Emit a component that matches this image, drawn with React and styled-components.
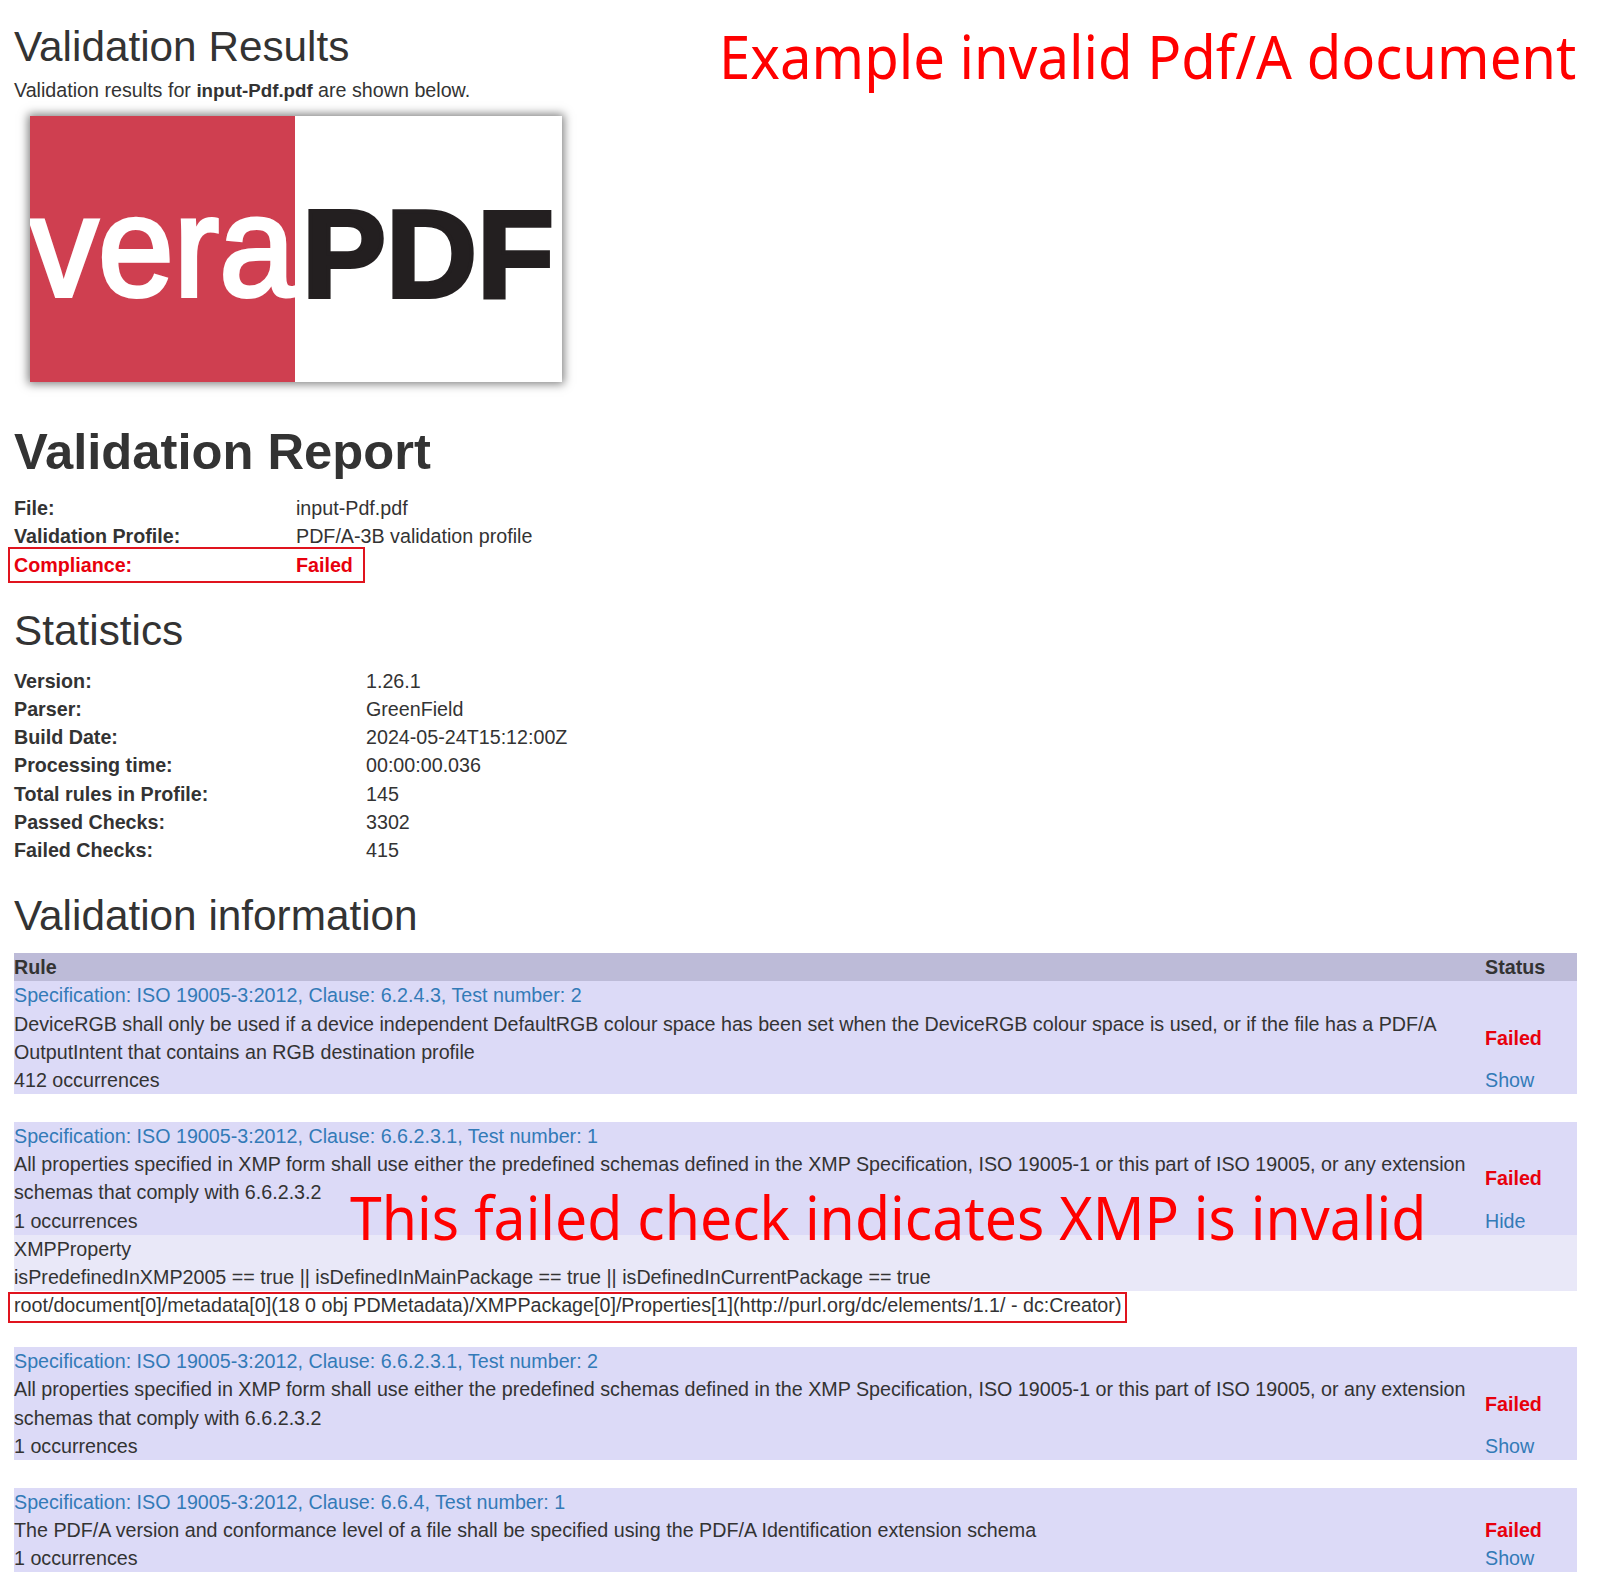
import React from 'react'
import styled, { createGlobalStyle } from 'styled-components'

const GlobalStyle = createGlobalStyle`
  html, body {
    margin: 0;
    padding: 0;
    background: #fff;
  }
  body {
    font-family: "Liberation Sans", Arial, sans-serif;
    font-size: 19.7px;
    line-height: 28.2px;
    color: #333;
  }
`

const Page = styled.div`
  position: relative;
  width: 1600px;
  height: 1594px;
  padding: 24px 23.5px 0 14px;
  box-sizing: border-box;
  overflow: hidden;
`
const PageTitle = styled.h1`
  margin: 0;
  font-size: 42.3px;
  line-height: 46px;
  font-weight: 400;
`
const Intro = styled.p`
  margin: 6px 0 0;
  b {
    font-size: 18.7px;
  }
`
const LogoBox = styled.div`
  width: 532px;
  height: 266px;
  margin: 10.8px 0 0 15.5px;
  box-shadow: 0 0 9px 2px rgba(0, 0, 0, 0.5);
  line-height: 0;
`
const ReportTitle = styled.h1`
  margin: 41.3px 0 0;
  font-size: 50.7px;
  line-height: 58px;
  font-weight: 700;
`
const Details = styled.div`
  margin-top: ${p => p.$top}px;
  display: grid;
  grid-template-columns: ${p => p.$label}px 1fr;
  grid-auto-rows: 28.2px;
`
const Label = styled.div`
  font-weight: 700;
  color: ${p => (p.$bad ? '#e8000d' : 'inherit')};
`
const Value = styled.div`
  font-weight: ${p => (p.$bad ? 700 : 400)};
  color: ${p => (p.$bad ? '#e8000d' : 'inherit')};
`
const Section = styled.h2`
  margin: ${p => p.$top}px 0 0;
  font-size: 42.3px;
  line-height: 46px;
  font-weight: 400;
`
const Marked = styled.div`
  position: relative;
  &::after {
    content: '';
    position: absolute;
    left: -6px;
    top: ${p => p.$top}px;
    width: ${p => p.$width}px;
    height: ${p => p.$height}px;
    border: 2px solid #e0141e;
    box-sizing: border-box;
    pointer-events: none;
  }
`
const Table = styled.div`
  margin-top: 14px;
`
const HeaderRow = styled.div`
  display: grid;
  grid-template-columns: 1471px 1fr;
  height: 28.2px;
  background: #bdbbd8;
  font-weight: 700;
`
const RuleRow = styled.div`
  display: grid;
  grid-template-columns: 1471px 1fr;
  background: #dcdaf7;
  margin-top: ${p => (p.$spaced ? '27.8px' : 0)};
`
const RuleText = styled.div`
  padding-right: 14px;
`
const SpecLink = styled.a`
  display: block;
  color: #337ab7;
  text-decoration: none;
`
const StatusCell = styled.div`
  display: flex;
  flex-direction: column;
  justify-content: flex-end;
`
const FailedText = styled.div`
  color: #e8000d;
  font-weight: 700;
`
const ToggleLink = styled.a`
  display: block;
  color: #337ab7;
  margin-top: ${p => (p.$tall ? '14.1px' : 0)};
`
const ErrorBlock = styled.div`
  background: #e9e8f8;
`
const Annotation = styled.div`
  position: absolute;
  left: ${p => p.$left}px;
  top: ${p => p.$top}px;
  color: #ff0000;
  font-family: "Noto Sans", "Open Sans", sans-serif;
  font-size: 61px;
  line-height: 62px;
  white-space: nowrap;
  transform-origin: left top;
  transform: scaleX(${p => p.$stretch});
`

const Logo = () => (
  <svg width="532" height="266" viewBox="0 0 532 266">
    <rect width="532" height="266" fill="#fff" />
    <rect width="265" height="266" fill="#cf3f50" />
    <text x="0" y="180" fill="#fff" stroke="#fff" strokeWidth="4" fontFamily="Liberation Sans" fontSize="142" textLength="265" lengthAdjust="spacingAndGlyphs">vera</text>
    <text x="272" y="181" fill="#231f20" stroke="#231f20" strokeWidth="4" fontFamily="Liberation Sans" fontWeight="700" fontSize="125" textLength="252" lengthAdjust="spacingAndGlyphs">PDF</text>
  </svg>
)

const stats = [
  ['Version:', '1.26.1'],
  ['Parser:', 'GreenField'],
  ['Build Date:', '2024-05-24T15:12:00Z'],
  ['Processing time:', '00:00:00.036'],
  ['Total rules in Profile:', '145'],
  ['Passed Checks:', '3302'],
  ['Failed Checks:', '415'],
]

const xmpRule = 'All properties specified in XMP form shall use either the predefined schemas defined in the XMP Specification, ISO 19005-1 or this part of ISO 19005, or any extension schemas that comply with 6.6.2.3.2'

const Rule = ({ spec, text, count, toggle = 'Show', tall = true, spaced = true }) => (
  <RuleRow $spaced={spaced}>
    <RuleText>
      <SpecLink>{spec}</SpecLink>
      <div>{text}</div>
      <div>{count}</div>
    </RuleText>
    <StatusCell>
      <FailedText>Failed</FailedText>
      <ToggleLink $tall={tall}>{toggle}</ToggleLink>
    </StatusCell>
  </RuleRow>
)

export default function App() {
  return (
    <Page>
      <GlobalStyle />
      <PageTitle>Validation Results</PageTitle>
      <Intro>Validation results for <b>input-Pdf.pdf</b> are shown below.</Intro>
      <LogoBox><Logo /></LogoBox>

      <ReportTitle>Validation Report</ReportTitle>
      <Marked $top={53} $width={357} $height={36}>
        <Details $top={13} $label={282}>
          <Label>File:</Label><Value>input-Pdf.pdf</Value>
          <Label>Validation Profile:</Label><Value>PDF/A-3B validation profile</Value>
          <Label $bad>Compliance:</Label><Value $bad>Failed</Value>
        </Details>
      </Marked>

      <Section $top={29}>Statistics</Section>
      <Details $top={13} $label={352}>
        {stats.map(([k, v]) => (
          <React.Fragment key={k}>
            <Label>{k}</Label>
            <Value>{v}</Value>
          </React.Fragment>
        ))}
      </Details>

      <Section $top={29}>Validation information</Section>
      <Table>
        <HeaderRow>
          <div>Rule</div>
          <div>Status</div>
        </HeaderRow>
        <Rule
          spaced={false}
          spec="Specification: ISO 19005-3:2012, Clause: 6.2.4.3, Test number: 2"
          text="DeviceRGB shall only be used if a device independent DefaultRGB colour space has been set when the DeviceRGB colour space is used, or if the file has a PDF/A OutputIntent that contains an RGB destination profile"
          count="412 occurrences"
        />
        <Rule
          spec="Specification: ISO 19005-3:2012, Clause: 6.6.2.3.1, Test number: 1"
          text={xmpRule}
          count="1 occurrences"
          toggle="Hide"
        />
        <ErrorBlock>
          <div>XMPProperty</div>
          <div>isPredefinedInXMP2005 == true || isDefinedInMainPackage == true || isDefinedInCurrentPackage == true</div>
        </ErrorBlock>
        <Marked $top={1} $width={1119} $height={31}>
          <div>root/document[0]/metadata[0](18 0 obj PDMetadata)/XMPPackage[0]/Properties[1](http://purl.org/dc/elements/1.1/ - dc:Creator)</div>
        </Marked>
        <Rule
          spec="Specification: ISO 19005-3:2012, Clause: 6.6.2.3.1, Test number: 2"
          text={xmpRule}
          count="1 occurrences"
        />
        <Rule
          spec="Specification: ISO 19005-3:2012, Clause: 6.6.4, Test number: 1"
          text="The PDF/A version and conformance level of a file shall be specified using the PDF/A Identification extension schema"
          count="1 occurrences"
          tall={false}
        />
      </Table>

      <Annotation $left={719} $top={25} $stretch={0.922}>Example invalid Pdf/A document</Annotation>
      <Annotation $left={350} $top={1186} $stretch={0.936}>This failed check indicates XMP is invalid</Annotation>
    </Page>
  )
}
